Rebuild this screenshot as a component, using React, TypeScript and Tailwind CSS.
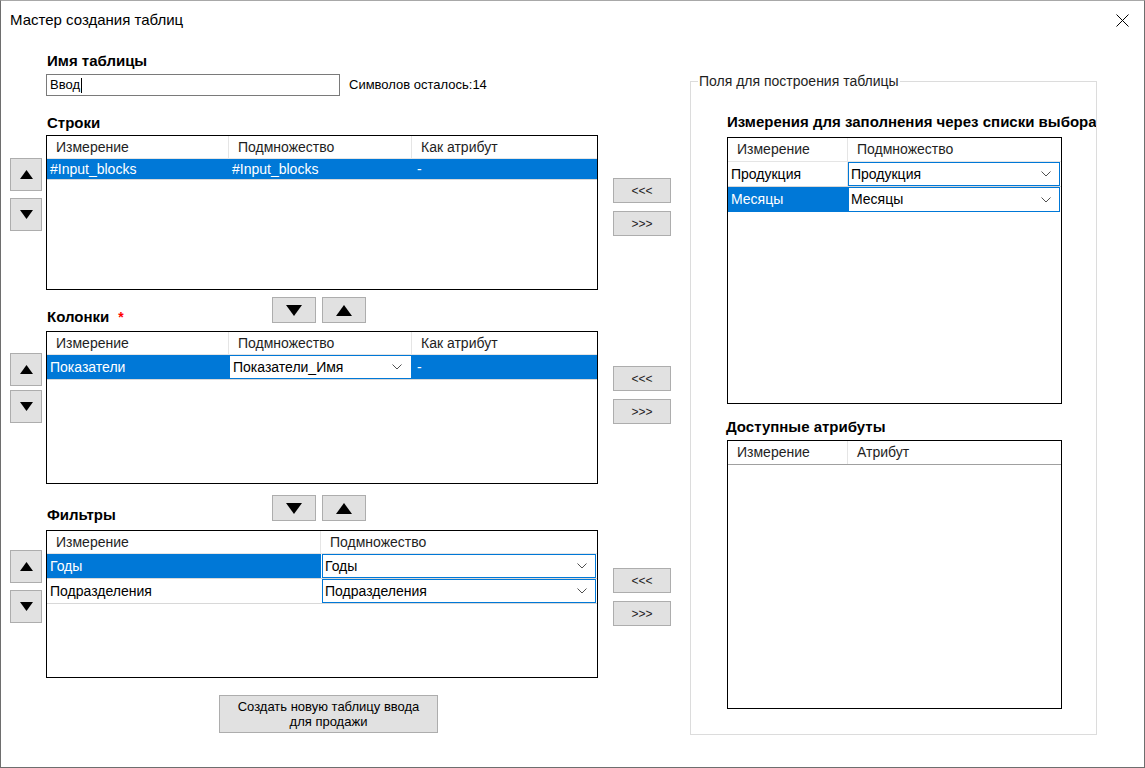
import React from "react";

const Tri = ({ up, w, h }: { up?: boolean; w: number; h: number }) => (
  <svg width={w} height={h} viewBox="0 0 10 8" preserveAspectRatio="none">
    <path d={up ? "M5 0 L10 8 L0 8 Z" : "M0 0 L10 0 L5 8 Z"} fill="#000" />
  </svg>
);

const Chevron = () => (
  <svg width="10" height="6" viewBox="0 0 10 6">
    <path d="M0.5 0.5 L5 5 L9.5 0.5" fill="none" stroke="#505050" strokeWidth="1" />
  </svg>
);

const SideButtons = ({ mt, gap }: { mt: string; gap: string }) => (
  <div className={`ml-[9px] w-[32px] flex flex-col ${mt} ${gap}`}>
    <div className="h-[33px] bg-[#e1e1e1] border border-[#adadad] flex items-center justify-center">
      <Tri up w={13} h={9} />
    </div>
    <div className="h-[33px] bg-[#e1e1e1] border border-[#adadad] flex items-center justify-center">
      <Tri w={13} h={9} />
    </div>
  </div>
);

const MoveButtons = ({ mt }: { mt: string }) => (
  <div className={`ml-[15px] w-[58px] flex flex-col gap-[8px] ${mt}`}>
    <div className="h-[25px] bg-[#e1e1e1] border border-[#adadad] flex items-center justify-center text-[12px] text-[#1e1e1e]">
      &lt;&lt;&lt;
    </div>
    <div className="h-[25px] bg-[#e1e1e1] border border-[#adadad] flex items-center justify-center text-[12px] text-[#1e1e1e]">
      &gt;&gt;&gt;
    </div>
  </div>
);

const OrderButtons = ({ mt }: { mt: string }) => (
  <div className={`flex gap-[6px] ${mt}`}>
    <div className="w-[44px] h-[26px] bg-[#e1e1e1] border border-[#adadad] flex items-center justify-center">
      <Tri w={16} h={11} />
    </div>
    <div className="w-[44px] h-[26px] bg-[#e1e1e1] border border-[#adadad] flex items-center justify-center">
      <Tri up w={16} h={11} />
    </div>
  </div>
);

const Combo = ({ text, blue }: { text: string; blue?: boolean }) => (
  <div
    className={`flex-1 h-full bg-white flex items-center justify-between pl-[2px] pr-[8px] text-black border ${
      blue ? "border-[#0078d7]" : "border-white"
    }`}
  >
    <span>{text}</span>
    <Chevron />
  </div>
);

const Head = ({ text, w, last }: { text: string; w: string; last?: boolean }) => (
  <div className={`${w} h-full flex items-center pl-[9px] ${last ? "" : "border-r border-[#e5e5e5]"}`}>
    {text}
  </div>
);

export default function App() {
  return (
    <div className="w-[1145px] h-[768px] bg-white border border-[#6e6e6e] border-t-[#a8a8a8] flex flex-col overflow-hidden font-['Liberation_Sans',Arial,sans-serif] text-[14px] text-[#1e1e1e]">
      {/* title bar */}
      <div className="h-[38px] shrink-0 flex items-center justify-between pl-[9px] pr-[15px]">
        <span className="text-[15px] text-black">Мастер создания таблиц</span>
        <svg width="13" height="13" viewBox="0 0 13 13">
          <path d="M0.5 0.5 L12.5 12.5 M12.5 0.5 L0.5 12.5" stroke="#000" strokeWidth="1" />
        </svg>
      </div>

      <div className="flex">
        {/* left column */}
        <div className="w-[689px] flex flex-col">
          <div className="mt-[12px] ml-[46px] h-[20px] leading-[20px] text-[15px] font-bold text-black">Имя таблицы</div>
          <div className="mt-[3px] ml-[45px] flex items-center text-[13px]">
            <div className="w-[294px] h-[22px] border border-[#7a7a7a] flex items-center pl-[3px] text-black">
              Ввод<span className="w-px h-[15px] bg-black ml-px" />
            </div>
            <span className="ml-[9px] text-black">Символов осталось:14</span>
          </div>
          <div className="mt-[17px] ml-[46px] h-[20px] leading-[20px] text-[15px] font-bold text-black">Строки</div>

          {/* Rows section */}
          <div className="mt-[2px] flex items-start">
            <SideButtons mt="mt-[23px]" gap="gap-[7px]" />
            <div className="ml-[4px] w-[552px] h-[155px] border border-black flex flex-col">
              <div className="h-[23px] flex border-b border-[#e5e5e5]">
                <Head text="Измерение" w="w-[182px]" />
                <Head text="Подмножество" w="w-[183px]" />
                <Head text="Как атрибут" w="flex-1" last />
              </div>
              <div className="h-[21px] flex border-b border-[#d8d8d8] bg-[#0078d7] text-white">
                <div className="w-[182px] flex items-center pl-[3px]">#Input_blocks</div>
                <div className="w-[183px] flex items-center pl-[3px]">#Input_blocks</div>
                <div className="flex-1 flex items-center pl-[5px]">-</div>
              </div>
            </div>
            <MoveButtons mt="mt-[43px]" />
          </div>

          <div className="h-[41px] flex items-start">
            <div className="ml-[46px] w-[225px] mt-[17px] h-[20px] leading-[20px] text-[15px] font-bold text-black">
              Колонки<span className="ml-[9px] text-[#ff0000] text-[14px]">*</span>
            </div>
            <OrderButtons mt="mt-[7px]" />
          </div>

          {/* Columns section */}
          <div className="flex items-start">
            <SideButtons mt="mt-[22px]" gap="gap-[4px]" />
            <div className="ml-[4px] w-[552px] h-[153px] border border-black flex flex-col">
              <div className="h-[23px] flex border-b border-[#e5e5e5]">
                <Head text="Измерение" w="w-[182px]" />
                <Head text="Подмножество" w="w-[183px]" />
                <Head text="Как атрибут" w="flex-1" last />
              </div>
              <div className="h-[25px] flex border-b border-[#d8d8d8] bg-[#0078d7] text-white">
                <div className="w-[182px] flex items-center pl-[3px]">Показатели</div>
                <div className="w-[183px] flex p-px">
                  <Combo text="Показатели_Имя" />
                </div>
                <div className="flex-1 flex items-center pl-[5px]">-</div>
              </div>
            </div>
            <MoveButtons mt="mt-[35px]" />
          </div>

          <div className="h-[46px] flex items-start">
            <div className="ml-[46px] w-[225px] mt-[21px] h-[20px] leading-[20px] text-[15px] font-bold text-black">Фильтры</div>
            <OrderButtons mt="mt-[11px]" />
          </div>

          {/* Filters section */}
          <div className="flex items-start">
            <SideButtons mt="mt-[20px]" gap="gap-[7px]" />
            <div className="ml-[4px] w-[552px] h-[148px] border border-black flex flex-col">
              <div className="h-[23px] flex border-b border-[#e5e5e5]">
                <Head text="Измерение" w="w-[274px]" />
                <Head text="Подмножество" w="flex-1" last />
              </div>
              <div className="h-[25px] flex border-b border-[#d8d8d8]">
                <div className="w-[274px] flex items-center pl-[3px] bg-[#0078d7] text-white">Годы</div>
                <div className="flex-1 flex pl-px pr-px">
                  <Combo text="Годы" blue />
                </div>
              </div>
              <div className="h-[25px] flex border-b border-[#d8d8d8]">
                <div className="w-[274px] flex items-center pl-[3px] text-black">Подразделения</div>
                <div className="flex-1 flex pl-px pr-px">
                  <Combo text="Подразделения" blue />
                </div>
              </div>
            </div>
            <MoveButtons mt="mt-[38px]" />
          </div>

          <div className="mt-[17px] ml-[218px] w-[219px] h-[38px] bg-[#e1e1e1] border border-[#adadad] flex items-center justify-center text-center text-[13px] leading-[15px] text-black">
            Создать новую таблицу ввода
            <br />
            для продажи
          </div>
        </div>

        {/* right group box */}
        <fieldset className="mt-[34px] w-[407px] h-[662px] border border-[#dcdcdc] flex flex-col">
          <legend className="ml-[7px] px-px leading-[16px] text-[14px] text-[#1e1e1e]">Поля для построения таблицы</legend>
          <div className="mt-[23px] ml-[36px] w-[369px] overflow-hidden whitespace-nowrap h-[20px] leading-[20px] text-[15px] font-bold text-black">
            Измерения для заполнения через списки выбора
          </div>
          <div className="mt-[5px] ml-[36px] w-[335px] h-[267px] border border-black flex flex-col">
            <div className="h-[24px] flex border-b border-[#e5e5e5]">
              <Head text="Измерение" w="w-[120px]" />
              <Head text="Подмножество" w="flex-1" last />
            </div>
            <div className="h-[25px] flex border-b border-[#d8d8d8]">
              <div className="w-[120px] flex items-center pl-[3px] text-black border-r border-[#e5e5e5]">Продукция</div>
              <div className="flex-1 flex pr-px">
                <Combo text="Продукция" blue />
              </div>
            </div>
            <div className="h-[25px] flex">
              <div className="w-[120px] flex items-center pl-[3px] bg-[#0078d7] text-white">Месяцы</div>
              <div className="flex-1 flex pr-px">
                <Combo text="Месяцы" blue />
              </div>
            </div>
          </div>
          <div className="mt-[13px] ml-[35px] h-[20px] leading-[20px] text-[15px] font-bold text-black">Доступные атрибуты</div>
          <div className="mt-[3px] ml-[36px] w-[335px] h-[269px] border border-black flex flex-col">
            <div className="h-[24px] flex border-b border-[#a0a0a0]">
              <Head text="Измерение" w="w-[120px]" />
              <Head text="Атрибут" w="flex-1" last />
            </div>
          </div>
        </fieldset>
      </div>
    </div>
  );
}
